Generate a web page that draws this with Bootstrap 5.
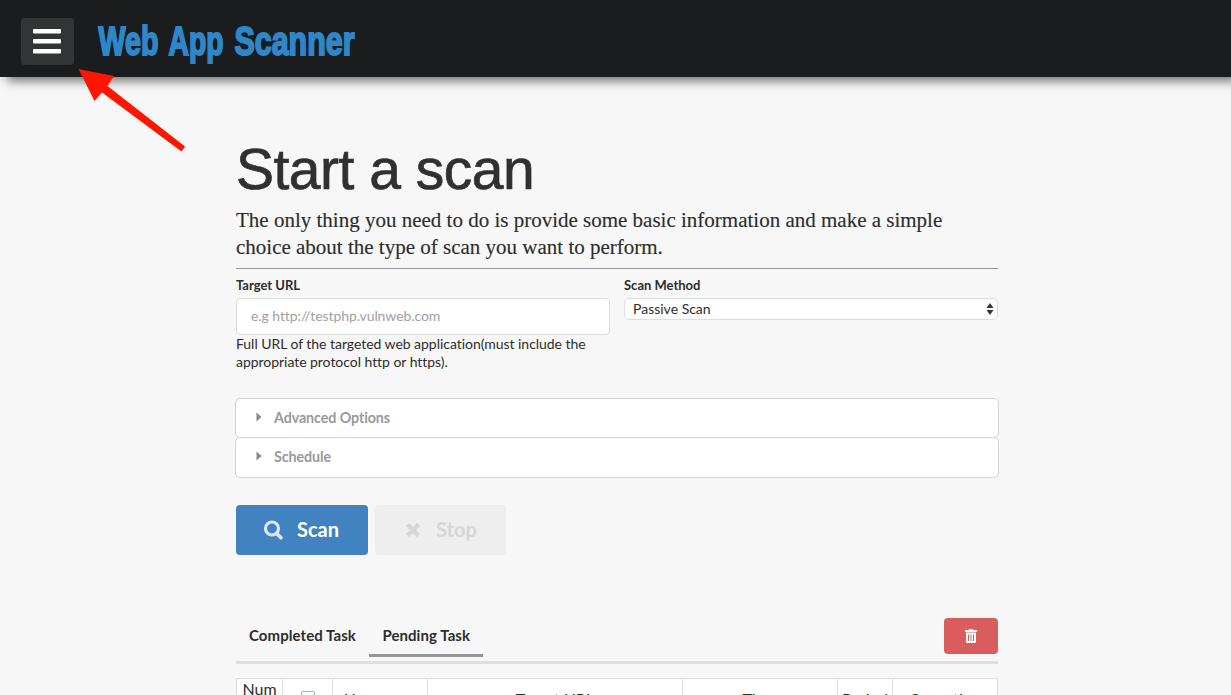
<!DOCTYPE html>
<html lang="en">
<head>
<meta charset="utf-8">
<meta name="viewport" content="width=device-width, initial-scale=1">
<title>Web App Scanner</title>
<link href="https://cdn.jsdelivr.net/npm/bootstrap@5.3.0/dist/css/bootstrap.min.css" rel="stylesheet">
<style>
html{overflow:hidden}
body{font-family:Lato,"Liberation Sans",sans-serif;font-size:14px;line-height:18px;color:#2d2d2d;background:#f7f7f7;height:695px;overflow:hidden;font-variant-ligatures:none}
.topbar{height:77px;background:#1b1c1d;box-shadow:7px 4px 10px rgba(0,0,0,.55);padding:0 21px}
.menu-btn{width:53px;height:47px;background:#333436;border-radius:4px;margin-top:5px;border:0}
.menu-btn svg{margin-left:-1px}
.brand-logo{margin-left:22px;margin-top:4px}
.brand-logo text{font-family:"Liberation Sans Narrow","Liberation Sans",sans-serif;font-weight:700;font-size:40px;fill:#2d87c8;stroke:#2d87c8;stroke-width:2}
.arrow-note{left:76px;top:66px}
.page-wrap{width:762px;margin-left:236px;padding-top:64px}
.title-text{font:400 57px/57px "Liberation Sans",Arial,sans-serif;letter-spacing:-.5px;color:#303030;margin:0;-webkit-text-stroke:.7px #303030}
.intro{font:400 21px/27px "Liberation Serif","Times New Roman",serif;margin:9px 0 7px;-webkit-text-stroke:.15px #2d2d2d}
.rule{border-top:1px solid #999}
.form-grid{column-gap:14px;margin-top:7px}
.field-label{font-weight:700;font-size:13px;line-height:18px;margin:0 0 4px;display:block}
.url-input{height:37px;border:1px solid #dcdddd;border-radius:4px;font-size:14px;letter-spacing:-.07px;padding:0 14px 2px}
.url-input::placeholder{color:#a0a0a0;opacity:1}
.help-text{letter-spacing:-.04px}
.method{height:22px;border:1px solid #dcdddd;border-radius:5px;padding:0 3px 0 8px;background:#fff}
.panel{width:764px;margin:27px 0 0 -1px}
.panel-row{height:40px;border:1px solid #d2d3d4;border-radius:5px;background:#fff;padding:0 0 1px 20px;color:#999;font-weight:700;font-size:14.3px;letter-spacing:-.1px}
.panel-row+.panel-row{margin-top:-1px;height:41px;padding-bottom:2px}
.panel-row span{margin-left:12px}
.panel-row svg{margin-top:-2px}
.actions{gap:7px;margin-top:27px}
.act{height:50px;border:0;border-radius:4px;font-weight:700;font-size:20px;padding:0 0 2px;display:flex;align-items:center}
.act svg{position:relative;top:1px}
.act-scan{width:132px;background:#4183c0;color:#fff}
.act-scan span{margin-left:13px}
.act-stop{width:131px;background:#eee;color:#d6d6d6}
.act-stop svg{margin-left:30px}
.act-stop span{margin-left:15px}
.tabs{height:46px;margin-top:63px;border-bottom:3px solid #dedede}
.tab-item{font-weight:700;font-size:15px;letter-spacing:.07px;height:39px;padding:8px 13px 0;border-bottom:3px solid transparent}
.tab-item.active{border-color:#949494;padding-left:13.500px}
.del{width:54px;height:36px;background:#d95c5f;border:0;border-radius:4px}
.tasks{table-layout:fixed;width:762px;margin-top:14px;border-collapse:collapse;font-size:16px;line-height:20px;background:#fff}
.tasks th{border:1px solid #dcdddd;font-weight:400;text-align:center;vertical-align:middle;padding:0 0 1px;height:42px}
.tasks th+th{padding-bottom:3px}
.tasks th+th+th{padding-bottom:2px}
.tasks th:nth-child(n+3){letter-spacing:.1px}
.check{width:14px;height:14px;border:1px solid #9fb4cc;border-radius:2px}
</style>
</head>
<body>
<header class="topbar d-flex align-items-center">
  <button class="menu-btn d-flex align-items-center justify-content-center p-0" aria-label="Menu">
    <svg width="28" height="25" viewBox="0 0 28 25" fill="#fff"><rect width="28" height="4.500" rx="1"/><rect y="10" width="28" height="4.500" rx="1"/><rect y="20" width="28" height="4.500" rx="1"/></svg>
  </button>
  <svg class="brand-logo" width="262" height="56" viewBox="0 -4 262 56">
    <text x="2.500" y="37.700" textLength="60" lengthAdjust="spacingAndGlyphs">Web</text>
    <text x="72.500" y="37.700" textLength="55" lengthAdjust="spacingAndGlyphs">App</text>
    <text x="138.500" y="37.700" textLength="120" lengthAdjust="spacingAndGlyphs">Scanner</text>
  </svg>
</header>
<svg class="arrow-note position-absolute" width="112" height="88" viewBox="76 66 112 88" fill="#ff1500"><path d="M78.500 69 114 76 107.500 86 185 146.500 181.500 151.500 102 92.500 94.500 101Z"/></svg>
<main class="page-wrap">
  <h1 class="title-text">Start a scan</h1>
  <p class="intro">The only thing you need to do is provide some basic information and make a simple choice about the type of scan you want to perform.</p>
  <div class="rule"></div>
  <div class="form-grid d-flex">
    <div class="flex-fill w-50">
      <label class="field-label" for="url">Target URL</label>
      <input id="url" class="url-input form-control" placeholder="e.g http://testphp.vulnweb.com">
      <div class="help-text">Full URL of the targeted web application(must include the appropriate protocol http or https).</div>
    </div>
    <div class="flex-fill w-50">
      <span class="field-label">Scan Method</span>
      <div class="method d-flex align-items-center justify-content-between">Passive Scan
        <svg width="8" height="14" viewBox="0 0 8 14" fill="#333"><path d="M4 1 7.500 6H.5ZM4 13 .5 8h7Z"/></svg>
      </div>
    </div>
  </div>
  <div class="panel">
    <div class="panel-row d-flex align-items-center"><svg width="6" height="10" viewBox="0 0 6 10" fill="#888"><path d="M.5 .5v9L5.500 5Z"/></svg><span>Advanced Options</span></div>
    <div class="panel-row d-flex align-items-center"><svg width="6" height="10" viewBox="0 0 6 10" fill="#888"><path d="M.5 .5v9L5.500 5Z"/></svg><span>Schedule</span></div>
  </div>
  <div class="actions d-flex">
    <button class="act act-scan"><svg class="ms-4" width="24" height="22" viewBox="0 0 24 22" fill="none" stroke="#dbe7f3"><circle cx="12" cy="9.500" r="6.500" stroke-width="3.200"/><path d="m16.700 14.500 4.300 4.300" stroke-width="3.600" stroke-linecap="round"/></svg><span>Scan</span></button>
    <button class="act act-stop"><svg width="16" height="16" viewBox="0 0 16 16" stroke="#d6d6d6" stroke-width="4.500"><path d="m2.500 2.500 11 11m0-11-11 11"/></svg><span>Stop</span></button>
  </div>
  <div class="tabs d-flex">
    <div class="tab-item">Completed Task</div>
    <div class="tab-item active">Pending Task</div>
    <button class="del ms-auto d-flex align-items-center justify-content-center p-0" aria-label="Delete"><svg width="14" height="16" viewBox="0 0 14 16"><path d="M5 1h4v1h4v2H1V2h4ZM2 4.500h10v9.500q0 1-1 1H3q-1 0-1-1Z" fill="#fff"/><path d="M4.500 6.500v6.500M7 6.500v6.500M9.500 6.500v6.500" stroke="#d95c5f"/></svg></button>
  </div>
  <table class="tasks">
    <colgroup><col style="width:46px"><col style="width:50px"><col style="width:95px"><col style="width:255px"><col style="width:155px"><col style="width:55px"><col style="width:105px"></colgroup>
    <thead><tr><th>Num<br>ber</th><th><div class="check mx-auto"></div></th><th>Username</th><th>Target URL</th><th>Time</th><th>Period</th><th>Operation</th></tr></thead>
  </table>
</main>
<script src="https://cdn.jsdelivr.net/npm/bootstrap@5.3.0/dist/js/bootstrap.bundle.min.js"></script>
</body>
</html>
